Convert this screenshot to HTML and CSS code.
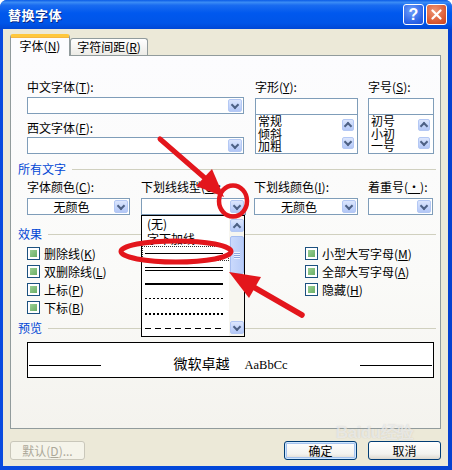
FILE: index.html
```html
<!DOCTYPE html>
<html>
<head>
<meta charset="utf-8">
<link rel="stylesheet" href="styles.css">
</head>
<body>
<div class="window">
  <div class="titlebar">
    <span class="title">替换字体</span>
    <span class="tb help">?</span>
    <span class="tb close"><svg width="11" height="11" viewBox="0 0 11 11"><path d="M1.5 1.5l8 8M9.5 1.5l-8 8" stroke="#fff" stroke-width="2.2" stroke-linecap="round"/></svg></span>
  </div>
  <div class="client">
    <div class="tabs">
      <div class="tab active">字体(<u>N</u>)</div>
      <div class="tab">字符间距(<u>R</u>)</div>
    </div>
    <div class="panel">
      <div class="fontrow">
        <div class="col c1">
          <div class="lbl l1">中文字体(<u>T</u>):</div>
          <div class="combo"><span class="val"></span><span class="dd"></span></div>
          <div class="lbl l2">西文字体(<u>F</u>):</div>
          <div class="combo"><span class="val"></span><span class="dd"></span></div>
        </div>
        <div class="col c2">
          <div class="lbl l3">字形(<u>Y</u>):</div>
          <div class="textbox"></div>
          <div class="listbox">
            <div class="litems"><div>常规</div><div>倾斜</div><div>加粗</div></div>
            <div class="vscroll"><span class="sb up"></span><span class="sb down"></span></div>
          </div>
        </div>
        <div class="col c3">
          <div class="lbl l3">字号(<u>S</u>):</div>
          <div class="textbox"></div>
          <div class="listbox">
            <div class="litems"><div>初号</div><div>小初</div><div>一号</div></div>
            <div class="vscroll"><span class="sb up"></span><span class="sb down"></span></div>
          </div>
        </div>
      </div>

      <div class="group g1">所有文字</div>
      <div class="row4">
        <div class="cc w1">
          <div class="lbl">字体颜色(<u>C</u>):</div>
          <div class="combo"><span class="val">无颜色</span><span class="dd"></span></div>
        </div>
        <div class="cc w2">
          <div class="lbl">下划线线型(<u>U</u>):</div>
          <div class="combo"><span class="val"></span><span class="dd"></span></div>
        </div>
        <div class="cc w3">
          <div class="lbl">下划线颜色(<u>I</u>):</div>
          <div class="combo"><span class="val">无颜色</span><span class="dd"></span></div>
        </div>
        <div class="cc w4">
          <div class="lbl">着重号(<u>・</u>):</div>
          <div class="combo"><span class="val"></span><span class="dd"></span></div>
        </div>
      </div>

      <div class="group g2">效果</div>
      <div class="effects">
        <div class="ecol left">
          <div class="chk"><span class="box"></span>删除线(<u>K</u>)</div>
          <div class="chk"><span class="box"></span>双删除线(<u>L</u>)</div>
          <div class="chk"><span class="box"></span>上标(<u>P</u>)</div>
          <div class="chk"><span class="box"></span>下标(<u>B</u>)</div>
        </div>
        <div class="ecol">
          <div class="chk"><span class="box"></span>小型大写字母(<u>M</u>)</div>
          <div class="chk"><span class="box"></span>全部大写字母(<u>A</u>)</div>
          <div class="chk"><span class="box"></span>隐藏(<u>H</u>)</div>
        </div>
      </div>

      <div class="group g3">预览</div>
      <div class="preview">
        <div class="pline pl"></div>
        <div class="ptext"><span class="cjk">微软卓越</span><span class="lat">AaBbCc</span></div>
        <div class="pline pr"></div>
      </div>

      <div class="ddlist">
        <div class="ditems">
          <div class="it txt">(无)</div>
          <div class="it txt">字下加线</div>
          <div class="it sel"><span class="ln single"></span></div>
          <div class="it"><span class="ln double"></span></div>
          <div class="it"><span class="ln thick"></span></div>
          <div class="it"><span class="ln dashed"></span></div>
          <div class="it"><span class="ln dotted"></span></div>
          <div class="it"><span class="ln longdash"></span></div>
        </div>
        <div class="lscroll">
          <span class="sb up big"></span>
          <span class="thumb"></span>
          <span class="fill"></span>
          <span class="sb down big"></span>
        </div>
      </div>
    </div>
    <div class="buttons">
      <div class="btn disabled">默认(<u>D</u>)...</div>
      <div class="spacer"></div>
      <div class="btn default">确定</div>
      <div class="btn cancel">取消</div>
    </div>
  </div>
  <div class="watermark">Baidu经验</div>
  <svg class="annot" width="452" height="470" viewBox="0 0 452 470">
    <line x1="160" y1="139" x2="206" y2="179" stroke="#E3161C" stroke-width="5" stroke-linecap="round"/>
    <polygon points="224,197 196,186 212,169" fill="#E3161C"/>
    <ellipse cx="233" cy="201" rx="14" ry="15.5" fill="none" stroke="#E3161C" stroke-width="4.5"/>
    <ellipse cx="176" cy="251.5" rx="55" ry="10.5" fill="none" stroke="#E3161C" stroke-width="5"/>
    <line x1="302" y1="315" x2="250" y2="285" stroke="#E3161C" stroke-width="5.5" stroke-linecap="round"/>
    <polygon points="229,272 249,298 261,277" fill="#E3161C"/>
  </svg>
</div>
</body>
</html>
```
FILE: styles.css
```css
* { box-sizing: border-box; }
html, body { margin: 0; padding: 0; }
body {
  width: 452px; height: 470px; overflow: hidden; background: #ffffff;
  font-family: "Noto Sans CJK SC", "Liberation Sans", sans-serif; font-size: 12px; color: #000;
}
u { text-decoration: underline; text-underline-offset: 1px; }
.window {
  position: relative; width: 452px; height: 470px;
  background: linear-gradient(90deg, #0A4BDF, #0046D8 50%, #0541D0);
  border-radius: 7px 7px 0 0; display: flex; flex-direction: column;
}
.titlebar {
  height: 29px; flex: none; display: flex; align-items: center;
  padding: 0 5px 0 8px; border-radius: 7px 7px 0 0;
  background: linear-gradient(#0A5BE6 0%, #3B8CF5 8%, #1A6CF0 18%, #0058EE 45%, #0055E8 80%, #0047D5 100%);
}
.title { flex: 1; color: #fff; font-weight: bold; font-size: 13px; letter-spacing: 0.5px; text-shadow: 1px 1px 0 #0A2A8A; }
.tb {
  width: 21px; height: 21px; border: 1px solid #fff; border-radius: 3px; margin-left: 2px;
  display: flex; align-items: center; justify-content: center;
}
.help {
  background: radial-gradient(circle at 40% 30%, #6F9EFA, #2A62E6 70%, #1F52D8);
  color: #fff; font-family: "Liberation Sans", sans-serif; font-weight: bold; font-size: 16px; line-height: 1;
}
.close { background: radial-gradient(circle at 40% 30%, #EE9676, #DA5A34 65%, #C8421C); }
.client {
  flex: 1; margin: 0 4px 4px 3px; background: #ECE9D8;
  display: flex; flex-direction: column; padding: 0 7px;
}
.tabs { display: flex; align-items: flex-end; height: 26px; position: relative; z-index: 1; }
.tab {
  height: 17px; width: 78px; border: 1px solid #919B9C; border-bottom: none;
  border-radius: 3px 3px 0 0; background: linear-gradient(#FFFFFF, #ECEBE6);
  line-height: 15px; text-align: center; white-space: nowrap;
}
.tab.active {
  height: 22px; width: 60px; margin-bottom: -1px; background: #FCFCFE;
  border-top: 3px solid #FFC83C; box-shadow: inset 0 1px 0 #F5B640; line-height: 18px;
}
.panel {
  height: 374px; border: 1px solid #919B9C; position: relative;
  background: linear-gradient(#FCFCFE 0%, #FAFAF8 60%, #F4F3EE 100%);
  padding: 24px 4px 0 7px;
}
.lbl { height: 14px; line-height: 14px; white-space: nowrap; }
.fontrow { display: flex; margin-left: 9px; }
.c1 { width: 217px; }
.c2 { width: 103px; margin-left: 11px; }
.c3 { width: 66px; margin-left: 10px; }
.l1 { margin-bottom: 3px; }
.l2 { margin-top: 7px; margin-bottom: 2px; }
.l3 { margin-bottom: 4px; }
.combo {
  height: 17px; border: 1px solid #7F9DB9; background: #fff;
  display: flex; align-items: center; padding: 1px;
}
.combo .val { flex: 1; text-align: center; line-height: 15px; }
.dd, .sb {
  width: 14px; height: 13px; border: 1px solid #B4C8F4; border-radius: 2px;
  background: linear-gradient(#DCE6FD, #C3D4FB 60%, #B3C7F6);
  display: flex; align-items: center; justify-content: center; flex: none;
}
.dd::after, .sb::after {
  content: ""; width: 4px; height: 4px;
  border-right: 2px solid #4D6185; border-bottom: 2px solid #4D6185;
}
.dd::after, .sb.down::after { transform: translateY(-1px) rotate(45deg); }
.sb.up::after { transform: translateY(1px) rotate(-135deg); }
.textbox { height: 17px; border: 1px solid #7F9DB9; background: #fff; }
.listbox { height: 40px; margin-top: -1px; border: 1px solid #7F9DB9; background: #fff; display: flex; }
.litems { flex: 1; padding: 0 0 0 2px; font-size: 12px; line-height: 12.5px; }
.litems div { height: 12.5px; }
.vscroll { width: 16px; display: flex; flex-direction: column; justify-content: space-between; padding: 4px 2px 4px 1px; }
.vscroll .sb { width: 12px; height: 12px; }
.group {
  display: flex; align-items: center; height: 14px; line-height: 14px;
  color: #0046D5; white-space: nowrap;
}
.group::after { content: ""; flex: 1; border-top: 1px solid #D0D0BF; margin-left: 6px; margin-top: 1px; }
.g1 { margin-top: 8px; }
.g2 { margin-top: 12px; }
.g3 { margin-top: 5px; }
.row4 { display: flex; margin-left: 9px; margin-top: 4px; }
.row4 .lbl { margin-bottom: 4px; }
.w1 { width: 103px; }
.w2 { width: 105px; margin-left: 11px; }
.w3 { width: 104px; margin-left: 8px; }
.w4 { width: 65px; margin-left: 10px; }
.effects { display: flex; margin-left: 9px; margin-top: 3px; }
.ecol.left { width: 278px; }
.chk { height: 18px; display: flex; align-items: center; white-space: nowrap; }
.box {
  width: 13px; height: 13px; border: 1px solid #1C5180; background: #fff;
  padding: 2px; margin-right: 4px; flex: none;
}
.box::before {
  content: ""; display: block; width: 100%; height: 100%;
  background: linear-gradient(135deg, #9ACF94, #6BAF66);
}
.preview {
  margin-left: 9px; margin-top: 7px; width: 407px; height: 36px;
  border: 1px solid #000; background: #fff;
  display: grid; grid-template-columns: 73px 1fr 73px;
}
.pline { height: 23px; border-bottom: 1px solid #000; }
.pl { margin-left: 1px; }
.pr { margin-right: 1px; }
.ptext { text-align: center; line-height: 16px; margin-top: 12px; white-space: nowrap; }
.ptext .cjk { font-size: 14px; }
.ptext .lat { font-family: "Liberation Serif", serif; font-size: 12.5px; margin-left: 15px; }
.ddlist {
  position: absolute; left: 130px; top: 159px; width: 104px; height: 122px;
  border: 1px solid #000; background: #fff; display: flex; z-index: 2;
}
.ditems { flex: 1; }
.it { height: 15px; display: flex; align-items: center; }
.it.txt { padding-left: 5px; font-size: 12px; white-space: nowrap; }
.it.sel { outline: 1px dotted #333; outline-offset: -1px; }
.ln { display: block; width: 78px; margin-left: 3px; }
.single { height: 1px; background: #000; }
.double { height: 4px; border-top: 1px solid #000; border-bottom: 1px solid #000; }
.thick { height: 2px; background: #000; }
.dashed { height: 1px; background: repeating-linear-gradient(90deg, #000 0 2px, transparent 2px 4px); }
.dotted { height: 2px; background: repeating-linear-gradient(90deg, #000 0 2px, transparent 2px 4px); }
.longdash { height: 1px; background: repeating-linear-gradient(90deg, #000 0 6px, transparent 6px 10px); }
.lscroll { width: 15px; display: flex; flex-direction: column; align-items: center; background: #F7F6F0; }
.sb.big { width: 14px; height: 13px; }
.lscroll .up { margin-top: 3px; }
.lscroll .down { margin-bottom: 2px; }
.thumb {
  width: 14px; height: 38px; margin-top: 4px; border: 1px solid #A6BDF0; border-radius: 2px;
  background: linear-gradient(90deg, #CAD9FC, #B8CCF8);
  display: flex; align-items: center; justify-content: center;
}
.thumb::after {
  content: ""; width: 6px; height: 7px;
  background: repeating-linear-gradient(#EEF3FE 0 1px, #8CA6DE 1px 2px);
}
.fill { flex: 1; }
.buttons { display: flex; margin-top: 12px; }
.spacer { flex: 1; }
.btn {
  height: 19px; width: 73px; border: 1px solid #003C74; border-radius: 3px;
  background: linear-gradient(#FFFFFF, #F3F3EF 70%, #DCD8CF);
  display: flex; align-items: center; justify-content: center; white-space: nowrap;
}
.btn.disabled { width: 75px; border-color: #C9C7BA; color: #ACA899; background: #F5F4EA; }
.btn.default { box-shadow: inset 0 0 0 1px #CEE7FF, inset 0 0 0 2px #A6C3EE; }
.btn.cancel { margin-left: 11px; }
.watermark {
  position: absolute; left: 336px; top: 425px; height: 16px; line-height: 16px;
  font-family: "Liberation Sans", sans-serif;
  font-size: 17px; font-weight: bold; color: rgba(255,255,255,0.6);
  text-shadow: 0 0 1px rgba(120,120,120,0.35); pointer-events: none; letter-spacing: -0.5px;
}
.annot { position: absolute; left: 0; top: 0; pointer-events: none; z-index: 10; }
```
